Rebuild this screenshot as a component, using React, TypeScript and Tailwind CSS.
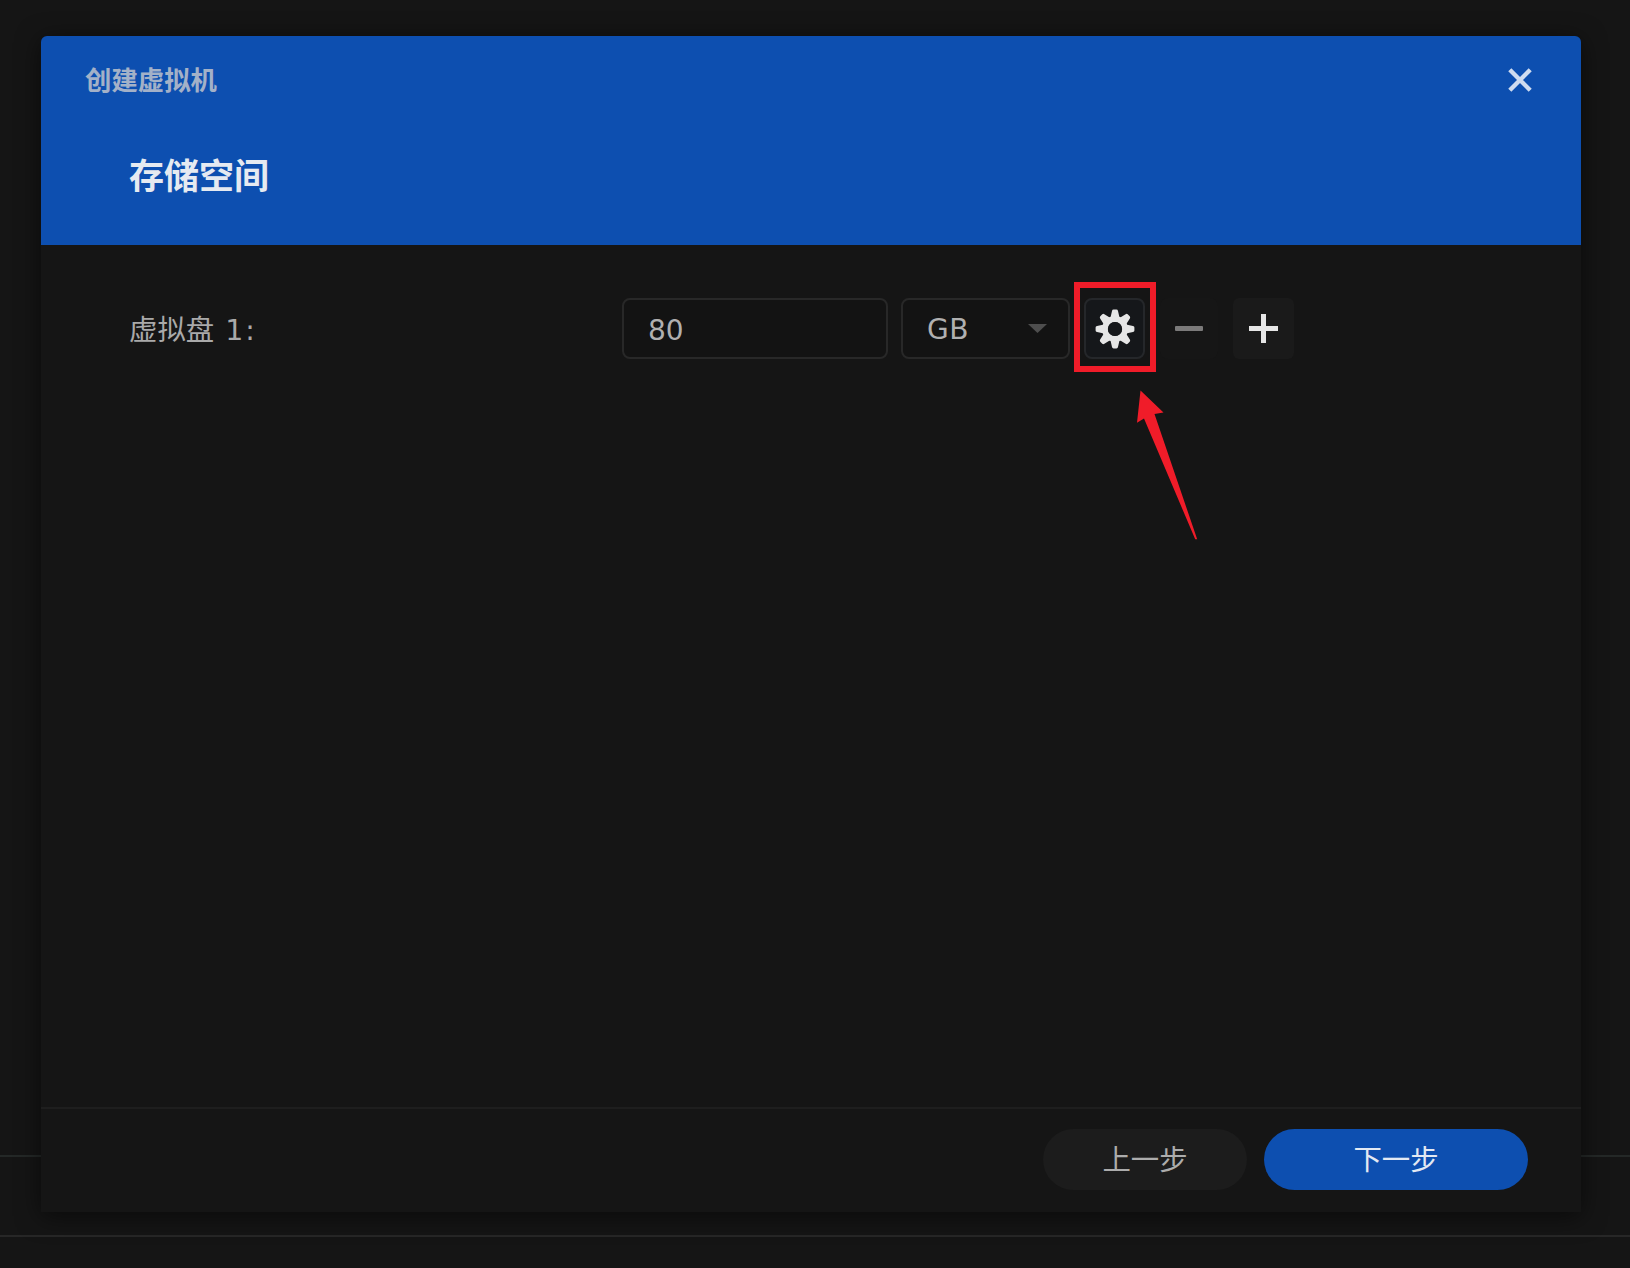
import type { ReactNode } from "react";

const TEETH = [0, 45, 90, 135, 180, 225, 270, 315];

function GearIcon() {
  return (
    <svg width="40" height="40" viewBox="-20 -20 40 40" fill="#e6e6e6">
      {TEETH.map((angle) => (
        <path
          key={angle}
          d="M-4.6 -11 L-3 -18 Q-2.7 -19.4 -1.4 -19.4 H1.4 Q2.7 -19.4 3 -18 L4.6 -11 Z"
          transform={`rotate(${angle})`}
        />
      ))}
      <circle r="10" fill="none" stroke="#e6e6e6" strokeWidth="5.8" />
      <circle r="7.1" fill="#15171a" />
    </svg>
  );
}

function CloseIcon() {
  return (
    <svg width="26" height="26" viewBox="0 0 26 26" fill="none" stroke="#cfdcf0" strokeWidth="4.4">
      <path d="M2.8 2.8 L23.2 23.2 M23.2 2.8 L2.8 23.2" />
    </svg>
  );
}

function Arrow() {
  return (
    <svg className="absolute left-[57px] top-[102px]" width="62" height="152" viewBox="0 0 62 152" fill="#f01c29">
      <path d="M3.5 0.5 L26.5 22.5 L17.5 24 L60.2 149.3 L58.2 149.3 L7 28.5 L0 32.7 Z" />
    </svg>
  );
}

function Field({ className, children }: { className: string; children: ReactNode }) {
  return (
    <div className={`flex h-[61px] items-center rounded-lg border-2 border-[#282828] bg-[#131313] pl-6 text-[28px] leading-none text-[#b0b0b0] ${className}`}>
      {children}
    </div>
  );
}

export default function App() {
  return (
    <div className="grid h-[1268px] w-[1630px] overflow-hidden bg-[#151515] font-['DejaVu_Sans','Noto_Sans_CJK_SC',sans-serif]">
      <div className="col-start-1 row-start-1 flex flex-col">
        <div className="h-[1157px] border-b-2 border-[#242827]" />
        <div className="h-20 border-b-2 border-[#272727]" />
      </div>

      <section className="z-10 col-start-1 row-start-1 ml-[41px] mt-9 flex h-[1176px] w-[1540px] flex-col rounded-t-md bg-[#151515] shadow-[0_4px_24px_rgba(0,0,0,0.55)]">
        <header className="h-[209px] rounded-t-md bg-[#0d4fb0] pl-11 pr-12">
          <div className="flex h-[89px] items-center justify-between">
            <h1 className="pt-[2px] text-[26.4px] font-bold leading-none text-[#a3b1c8]">创建虚拟机</h1>
            <button aria-label="关闭" className="mb-[2px]">
              <CloseIcon />
            </button>
          </div>
          <h2 className="ml-11 mt-[35px] text-[35px] font-bold leading-none text-[#e5eaf1]">存储空间</h2>
        </header>

        <main className="flex-1 pl-[88px] pt-[53px]">
          <div className="flex h-[61px] items-center">
            <div className="flex w-[493px] pt-[5px] text-[28.4px] leading-none text-[#a9a9a9]">
              <span>虚拟盘</span>
              <span className="ml-[11px]">1</span>
              <span className="ml-[2px]">:</span>
            </div>
            <Field className="w-[266px] pt-[4px]">80</Field>
            <Field className="ml-[13px] w-[169px] justify-between pr-[21px]">
              <span className="pt-[2px] tracking-[0.5px]">GB</span>
              <svg width="19" height="10" viewBox="0 0 19 10" fill="#4e4e4e">
                <path d="M0 0 H19 L9.5 9 Z" />
              </svg>
            </Field>
            <div className="relative -mb-[13px] -mt-4 ml-1 flex h-[90px] w-[82px] shrink-0 items-start self-start border-6 border-[#f01c29] pl-1 pt-[10px]">
              <button aria-label="设置" className="flex h-[61px] w-[61px] items-center justify-center rounded-lg border-2 border-[#25272a] bg-[#15171a]">
                <GearIcon />
              </button>
              <Arrow />
            </div>
            <button aria-label="移除" className="ml-1 flex h-[61px] w-[58px] items-center justify-center rounded-lg bg-[#161616]">
              <span className="h-[5px] w-7 rounded-[1px] bg-[#7b7a7a]" />
            </button>
            <button aria-label="添加" className="ml-[15px] flex h-[61px] w-[61px] items-center justify-center rounded-md bg-[#1a1a1a]">
              <svg width="29" height="29" viewBox="0 0 29 29" stroke="#e6e6e6" strokeWidth="5">
                <path d="M14.5 0 V29 M0 14.5 H29" />
              </svg>
            </button>
          </div>
        </main>

        <footer className="flex h-[105px] items-start justify-end gap-[17px] border-t-2 border-[#1e1e1e] pr-[53px] pt-5 text-[28.4px] leading-none">
          <button className="h-[61px] w-[204px] rounded-full bg-[#1c1c1c] pt-1 text-[#acacac]">上一步</button>
          <button className="h-[61px] w-[264px] rounded-full bg-[#0d4fb0] pt-1 text-[#e2e9f3]">下一步</button>
        </footer>
      </section>
    </div>
  );
}
